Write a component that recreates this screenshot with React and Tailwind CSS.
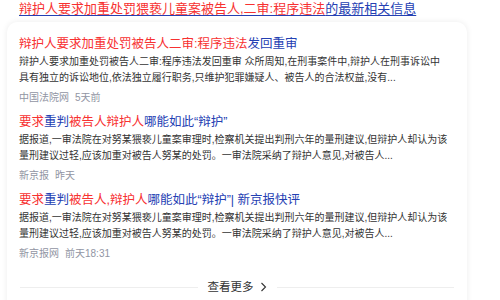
import React from "react";

const R = ({ children }) => <span className="text-[#f73131]">{children}</span>;

const items = [
  {
    title: (
      <>
        <R>辩护人要求加重处罚被告人二审:程序违法</R>发回重审
      </>
    ),
    snippet: [
      "辩护人要求加重处罚被告人二审:程序违法发回重审 众所周知,在刑事案件中,辩护人在刑事诉讼中",
      "具有独立的诉讼地位,依法独立履行职务,只维护犯罪嫌疑人、被告人的合法权益,没有...",
    ],
    source: "中国法院网",
    time: "5天前",
  },
  {
    title: (
      <>
        <R>要求</R>重判<R>被告人辩护人</R>哪能如此“辩护”
      </>
    ),
    snippet: [
      "据报道,一审法院在对努某猥亵儿童案审理时,检察机关提出判刑六年的量刑建议,但辩护人却认为该",
      "量刑建议过轻,应该加重对被告人努某的处罚。一审法院采纳了辩护人意见,对被告人...",
    ],
    source: "新京报",
    time: "昨天",
  },
  {
    title: (
      <>
        <R>要求</R>重判<R>被告人,辩护人</R>哪能如此“辩护”| 新京报快评
      </>
    ),
    snippet: [
      "据报道,一审法院在对努某猥亵儿童案审理时,检察机关提出判刑六年的量刑建议,但辩护人却认为该",
      "量刑建议过轻,应该加重对被告人努某的处罚。一审法院采纳了辩护人意见,对被告人...",
    ],
    source: "新京报网",
    time: "前天18:31",
  },
];

export default function App() {
  return (
    <div
      className="w-[500px] h-[300px] overflow-hidden bg-white"
      style={{ fontFamily: '"Liberation Sans", "Noto Sans CJK SC", sans-serif' }}
    >
      <div className="pl-[19px] text-[13px] leading-[17px] underline underline-offset-2 text-[#2440b3]">
        <span className="text-[#f73131]">辩护人要求加重处罚猥亵儿童案被告人,二审:程序违法</span>
        的最新相关信息
      </div>

      <div className="ml-[7px] mt-[5px] w-[460px] rounded-t-[10px] bg-white shadow-[0_0_6px_rgba(0,0,0,0.08)] px-[12px] pt-[12px]">
        <div className="flex flex-col gap-[6px]">
          {items.map((it, i) => (
            <div key={i}>
              <div className="text-[12.5px] leading-[20px] text-[#2440b3]">{it.title}</div>
              <div className="text-[10px] leading-[16px] text-[#333] whitespace-nowrap">
                {it.snippet.map((l, j) => (
                  <div key={j}>{l}</div>
                ))}
              </div>
              <div className="mt-[4px] text-[10px] leading-[16px] text-[#9195a3] flex gap-[6px]">
                <span>{it.source}</span>
                <span>{it.time}</span>
              </div>
            </div>
          ))}
        </div>

        <div className="mt-[17px] flex items-center gap-[10px] px-[1px]">
          <div className="flex-1 h-px bg-[#eeeeee]" />
          <div className="flex items-center gap-[6px] text-[11.5px] leading-[16px] text-[#333]">
            查看更多
            <svg width="7" height="10" viewBox="0 0 7 10" fill="none">
              <path d="M1.5 1l4 4-4 4" stroke="#333" strokeWidth="1.1" />
            </svg>
          </div>
          <div className="flex-1 h-px bg-[#eeeeee]" />
        </div>
        <div className="h-[20px]" />
      </div>
    </div>
  );
}
